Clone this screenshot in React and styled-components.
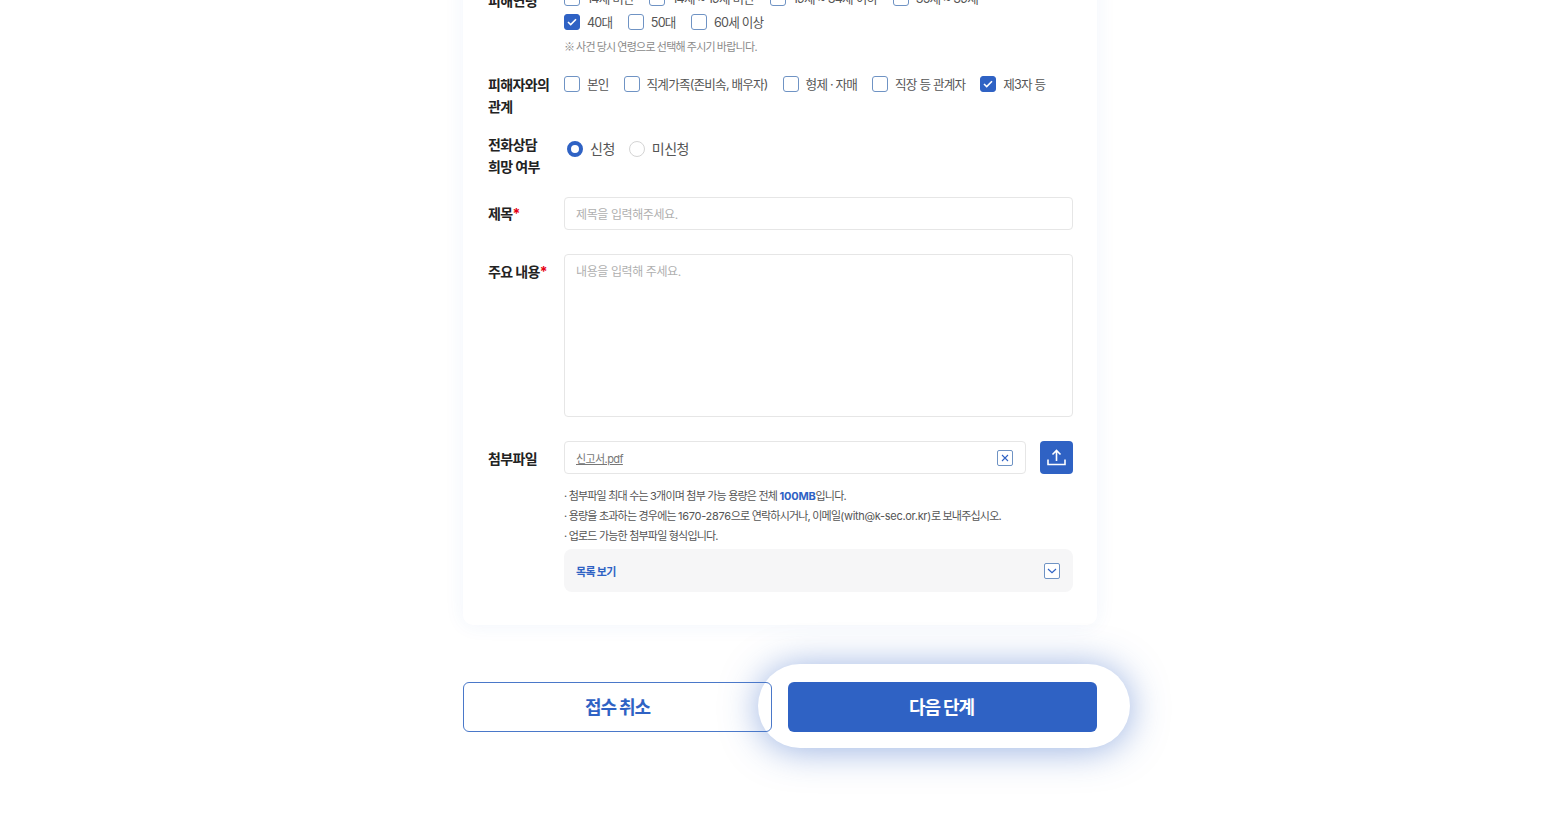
import React from 'react';
import styled, { createGlobalStyle } from 'styled-components';

const GlobalStyle = createGlobalStyle`
    html, body {
        margin: 0;
        padding: 0;
        height: 814px;
        overflow: hidden;
        background: #fff;
    }
    * {
        box-sizing: border-box;
    }
    body, input, textarea, button {
        font-family: Inter, "Noto Sans CJK KR", "Noto Sans", sans-serif;
    }
`;

const Page = styled.div`
    width: 634px;
    margin: -60px 0 0 463px;
`;

const Card = styled.section`
    background: #fff;
    border-radius: 10px;
    box-shadow: 0 0 20px rgba(47, 98, 196, 0.07);
    padding: 50px 25px 33px;
`;

const Row = styled.div`
    display: grid;
    grid-template-columns: 76px 509px;
    margin-bottom: ${(p) => p.$gap || 0}px;
`;

const Label = styled.div`
    font-size: 14px;
    font-weight: 700;
    line-height: 21.5px;
    letter-spacing: -0.6px;
    color: #222;
    padding-top: ${(p) => p.$top || 0}px;
`;

const Star = styled.span`
    color: #e60012;
`;

const Options = styled.div`
    display: flex;
    flex-wrap: wrap;
    column-gap: ${(p) => p.$gap || 15}px;
    row-gap: 8px;
    max-width: ${(p) => p.$max || 509}px;
    padding-top: ${(p) => p.$top || 0}px;
    padding-left: ${(p) => p.$inset || 0}px;
`;

const Option = styled.label`
    display: flex;
    align-items: center;
    gap: 7px;
    height: 16px;
    font-size: ${(p) => p.$size || 12.6}px;
    letter-spacing: ${(p) => (p.$size ? -0.5 : -0.8)}px;
    color: #555;
    white-space: nowrap;
`;

const OptionText = styled.span`
    margin-top: -2px;
`;

const Box = styled.span`
    display: flex;
    align-items: center;
    justify-content: center;
    width: 16px;
    height: 16px;
    border-radius: 3px;
    border: 1px solid ${(p) => (p.$on ? '#2f62c4' : '#6f93c4')};
    background: ${(p) => (p.$on ? '#2f62c4' : '#fff')};
`;

const Radio = styled.span`
    width: 16px;
    height: 16px;
    border-radius: 50%;
    border: ${(p) => (p.$on ? '4.5px solid #2f62c4' : '1px solid #d4d4d4')};
    background: #fff;
`;

const Note = styled.p`
    margin: 9px 0 0;
    font-family: "Noto Sans CJK KR", sans-serif;
    font-size: 11px;
    line-height: 15px;
    letter-spacing: -0.7px;
    color: #8a8a8a;
`;

const Input = styled.div`
    display: flex;
    align-items: center;
    justify-content: space-between;
    height: 33px;
    padding: 0 11px;
    border: 1px solid #e6e6e6;
    border-radius: 4px;
    background: #fff;
    font-size: 12px;
    letter-spacing: -0.4px;
    color: #b0b0b0;
`;

const TextArea = styled(Input)`
    align-items: flex-start;
    height: 163px;
    padding-top: 7px;
`;

const FileRow = styled.div`
    display: flex;
    justify-content: space-between;
`;

const FileInput = styled(Input)`
    width: 462px;
    padding-right: 12px;
    color: #777;
`;

const FileName = styled.span`
    font-size: 11px;
    letter-spacing: -0.6px;
    text-decoration: underline;
`;

const IconBox = styled.span`
    display: flex;
    align-items: center;
    justify-content: center;
    width: 16px;
    height: 16px;
    border: 1px solid #6f93c4;
    border-radius: 2px;
    background: #fff;
`;

const Upload = styled.div`
    display: flex;
    align-items: center;
    justify-content: center;
    width: 33px;
    height: 33px;
    border-radius: 4px;
    background: #2f62c4;
`;

const Notes = styled.ul`
    list-style: none;
    margin: 12px 0 3px;
    padding: 0;
`;

const NoteItem = styled.li`
    font-size: 11px;
    line-height: 20px;
    letter-spacing: -0.8px;
    color: #555;
`;

const Latin = styled.span`
    letter-spacing: -0.3px;
`;

const Strong = styled.b`
    color: #2f62c4;
    font-weight: 700;
    letter-spacing: -0.2px;
`;

const Accordion = styled.div`
    display: flex;
    align-items: center;
    justify-content: space-between;
    height: 43px;
    padding: 0 13px 0 12px;
    border-radius: 8px;
    background: #f6f6f7;
    font-size: 11px;
    font-weight: 700;
    letter-spacing: -0.7px;
    color: #2f62c4;
`;

const Actions = styled.div`
    display: flex;
    justify-content: space-between;
    margin-top: 57px;
`;

const Cancel = styled.button`
    position: relative;
    z-index: 2;
    width: 309px;
    height: 50px;
    padding: 0 0 2px;
    border: 1px solid #4a78c9;
    border-radius: 6px;
    background: transparent;
    font-size: 18px;
    font-weight: 700;
    letter-spacing: -1.1px;
    color: #2f62c4;
`;

const NextWrap = styled.div`
    position: relative;
    width: 309px;
    height: 50px;

    &::before {
        content: '';
        position: absolute;
        z-index: 0;
        top: -18px;
        bottom: -16px;
        left: -30px;
        right: -33px;
        border-radius: 42px;
        background: #fff;
        box-shadow: 0 2px 36px rgba(47, 98, 196, 0.5);
    }
`;

const Next = styled.button`
    position: relative;
    z-index: 3;
    width: 100%;
    height: 100%;
    padding: 0 2px 2px 0;
    border: 0;
    border-radius: 6px;
    background: #2f62c4;
    font-size: 18px;
    font-weight: 700;
    letter-spacing: -1.1px;
    color: #fff;
`;

const Check = () => (
    <svg width="10" height="8" viewBox="0 0 10 8" fill="none">
        <path d="M1 4l2.7 2.6L9 1.2" stroke="#fff" strokeWidth="1.6" />
    </svg>
);

const CheckOption = ({ on, children }) => (
    <Option>
        <Box $on={on}>{on && <Check />}</Box>
        <OptionText>{children}</OptionText>
    </Option>
);

const RadioOption = ({ on, children }) => (
    <Option $size={14}>
        <Radio $on={on} />
        <OptionText>{children}</OptionText>
    </Option>
);

export default function App() {
    return (
        <Page>
            <GlobalStyle />
            <Card>
                <Row $gap={20}>
                    <Label>피해연령</Label>
                    <div>
                        <Options $max={440} $gap={15.5}>
                            <CheckOption>14세 미만</CheckOption>
                            <CheckOption>14세 ~ 19세 미만</CheckOption>
                            <CheckOption>19세 ~ 34세 이하</CheckOption>
                            <CheckOption>35세 ~ 39세</CheckOption>
                            <CheckOption on>40대</CheckOption>
                            <CheckOption>50대</CheckOption>
                            <CheckOption>60세 이상</CheckOption>
                        </Options>
                        <Note>※ 사건 당시 연령으로 선택해 주시기 바랍니다.</Note>
                    </div>
                </Row>
                <Row $gap={17}>
                    <Label>피해자와의<br />관계</Label>
                    <Options $top={2}>
                        <CheckOption>본인</CheckOption>
                        <CheckOption>직계가족(존비속, 배우자)</CheckOption>
                        <CheckOption>형제 · 자매</CheckOption>
                        <CheckOption>직장 등 관계자</CheckOption>
                        <CheckOption on>제3자 등</CheckOption>
                    </Options>
                </Row>
                <Row $gap={20}>
                    <Label>전화상담<br />희망 여부</Label>
                    <Options $inset={3} $top={7} $gap={14}>
                        <RadioOption on>신청</RadioOption>
                        <RadioOption>미신청</RadioOption>
                    </Options>
                </Row>
                <Row $gap={24}>
                    <Label $top={6}>제목<Star>*</Star></Label>
                    <Input>제목을 입력해주세요.</Input>
                </Row>
                <Row $gap={24}>
                    <Label $top={7}>주요 내용<Star>*</Star></Label>
                    <TextArea>내용을 입력해 주세요.</TextArea>
                </Row>
                <Row>
                    <Label $top={7}>첨부파일</Label>
                    <div>
                        <FileRow>
                            <FileInput>
                                <FileName>신고서.pdf</FileName>
                                <IconBox>
                                    <svg width="8" height="8" viewBox="0 0 8 8" fill="none">
                                        <path d="M1 1l6 6M7 1L1 7" stroke="#2f62c4" strokeWidth="1.1" />
                                    </svg>
                                </IconBox>
                            </FileInput>
                            <Upload>
                                <svg width="19" height="17" viewBox="0 0 19 17" fill="none">
                                    <path d="M9.5 12V1.5M5.5 5.5l4-4 4 4M1 10.5v5h17v-5" stroke="#fff" strokeWidth="1.6" />
                                </svg>
                            </Upload>
                        </FileRow>
                        <Notes>
                            <NoteItem>· 첨부파일 최대 수는 3개이며 첨부 가능 용량은 전체 <Strong>100MB</Strong>입니다.</NoteItem>
                            <NoteItem>· 용량을 초과하는 경우에는 <Latin>1670-2876</Latin>으로 연락하시거나, 이메일<Latin>(with@k-sec.or.kr)</Latin>로 보내주십시오.</NoteItem>
                            <NoteItem>· 업로드 가능한 첨부파일 형식입니다.</NoteItem>
                        </Notes>
                        <Accordion>
                            목록 보기
                            <IconBox>
                                <svg width="10" height="6" viewBox="0 0 10 6" fill="none">
                                    <path d="M1 1l4 3.6L9 1" stroke="#2f62c4" strokeWidth="1.2" />
                                </svg>
                            </IconBox>
                        </Accordion>
                    </div>
                </Row>
            </Card>
            <Actions>
                <Cancel>접수 취소</Cancel>
                <NextWrap>
                    <Next>다음 단계</Next>
                </NextWrap>
            </Actions>
        </Page>
    );
}
